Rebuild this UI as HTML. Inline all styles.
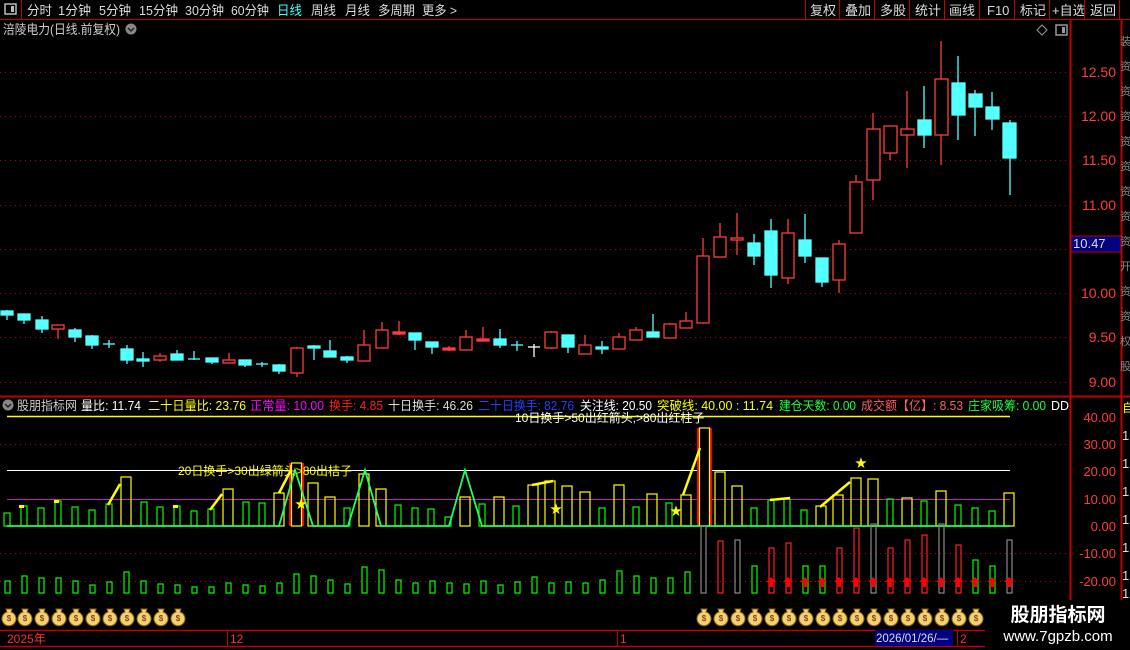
<!DOCTYPE html>
<html><head><meta charset="utf-8"><style>
html,body{margin:0;padding:0;background:#000;width:1130px;height:650px;overflow:hidden}
svg{display:block;font-family:"Liberation Sans","Noto Sans CJK SC",sans-serif}
</style></head><body>
<svg width="1130" height="650" viewBox="0 0 1130 650" xmlns="http://www.w3.org/2000/svg">
<rect width="1130" height="650" fill="#000"/>
<!-- toolbar -->
<line x1="0" y1="19.5" x2="1130" y2="19.5" stroke="#c00000"/>
<line x1="21.5" y1="0" x2="21.5" y2="19" stroke="#c00000"/>
<rect x="5" y="4" width="11" height="10" fill="none" stroke="#bbb" stroke-width="1.5"/><rect x="11" y="6" width="3" height="6" fill="#bbb"/>
<g font-size="13" fill="#ddd" lengthAdjust="spacingAndGlyphs">
<text x="27" y="15" textLength="25" lengthAdjust="spacingAndGlyphs">分时</text>
<text x="58" y="15" textLength="33" lengthAdjust="spacingAndGlyphs">1分钟</text>
<text x="99" y="15" textLength="32" lengthAdjust="spacingAndGlyphs">5分钟</text>
<text x="139" y="15" textLength="39" lengthAdjust="spacingAndGlyphs">15分钟</text>
<text x="185" y="15" textLength="39" lengthAdjust="spacingAndGlyphs">30分钟</text>
<text x="231" y="15" textLength="38" lengthAdjust="spacingAndGlyphs">60分钟</text>
<text x="277" y="15" fill="#40ffff" textLength="25" lengthAdjust="spacingAndGlyphs">日线</text>
<text x="311" y="15" textLength="25" lengthAdjust="spacingAndGlyphs">周线</text>
<text x="345" y="15" textLength="25" lengthAdjust="spacingAndGlyphs">月线</text>
<text x="378" y="15" textLength="37" lengthAdjust="spacingAndGlyphs">多周期</text>
<text x="422" y="15" textLength="35" lengthAdjust="spacingAndGlyphs">更多 &gt;</text>
<text x="810" y="15">复权</text><text x="845" y="15">叠加</text><text x="880" y="15">多股</text><text x="915" y="15">统计</text><text x="949" y="15">画线</text><text x="987" y="15">F10</text><text x="1020" y="15">标记</text><text x="1052" y="15">+自选</text><text x="1090" y="15">返回</text>
</g>
<g stroke="#c00000"><line x1="805.5" y1="0" x2="805.5" y2="19"/><line x1="839.5" y1="0" x2="839.5" y2="19"/><line x1="874.5" y1="0" x2="874.5" y2="19"/><line x1="909.5" y1="0" x2="909.5" y2="19"/><line x1="944.5" y1="0" x2="944.5" y2="19"/><line x1="979.5" y1="0" x2="979.5" y2="19"/><line x1="1014.5" y1="0" x2="1014.5" y2="19"/><line x1="1049.5" y1="0" x2="1049.5" y2="19"/><line x1="1084.5" y1="0" x2="1084.5" y2="19"/><line x1="1119.5" y1="0" x2="1119.5" y2="19"/></g>
<text x="3" y="34" font-size="13" fill="#ccc" textLength="117" lengthAdjust="spacingAndGlyphs">涪陵电力(日线.前复权)</text>
<circle cx="131" cy="29" r="5.5" fill="#888"/><path d="M128 28 l3 3 l3 -3" stroke="#222" stroke-width="1.5" fill="none"/>
<path d="M1042 25 l5 5 l-5 5 l-5 -5z" fill="none" stroke="#999"/>
<rect x="1056" y="25" width="11" height="10" fill="none" stroke="#999" stroke-width="1.5"/><rect x="1062" y="27" width="3" height="6" fill="#999"/>
<!-- axes -->
<line x1="1070.5" y1="20" x2="1070.5" y2="628" stroke="#c00000" stroke-width="2"/>
<line x1="1121.5" y1="20" x2="1121.5" y2="628" stroke="#c00000" stroke-width="2"/>
<line x1="0" y1="396.5" x2="1130" y2="396.5" stroke="#c00000" stroke-width="2"/>
<g stroke="#c00000" stroke-dasharray="1,4">
<line x1="0" y1="72.5" x2="1066" y2="72.5"/><line x1="0" y1="116.5" x2="1066" y2="116.5"/><line x1="0" y1="160.5" x2="1066" y2="160.5"/><line x1="0" y1="205.5" x2="1066" y2="205.5"/><line x1="0" y1="249.5" x2="1066" y2="249.5"/><line x1="0" y1="293.5" x2="1066" y2="293.5"/><line x1="0" y1="337.5" x2="1066" y2="337.5"/><line x1="0" y1="382.5" x2="1066" y2="382.5"/>
<line x1="0" y1="444.5" x2="1066" y2="444.5"/><line x1="0" y1="553.5" x2="1066" y2="553.5"/><line x1="0" y1="581.5" x2="1066" y2="581.5"/>
</g>
<g font-size="14" fill="#ff3c3c" text-anchor="end">
<text x="1116" y="77">12.50</text><text x="1116" y="121">12.00</text><text x="1116" y="165">11.50</text><text x="1116" y="210">11.00</text><text x="1116" y="298">10.00</text><text x="1116" y="342">9.50</text><text x="1116" y="387">9.00</text>
</g>
<g font-size="13" fill="#ff3c3c" text-anchor="end">
<text x="1116" y="422">40.00</text><text x="1116" y="449">30.00</text><text x="1116" y="476">20.00</text><text x="1116" y="504">10.00</text><text x="1116" y="531">0.00</text><text x="1116" y="558">-10.00</text><text x="1116" y="586">-20.00</text>
</g>
<rect x="1071" y="236" width="50" height="16" fill="#000080" stroke="#c00000"/>
<text x="1073" y="248" font-size="13" fill="#ddd">10.47</text>
<g fill="#888" font-size="11"><text x="1120" y="45">装</text><text x="1120" y="70">资</text><text x="1120" y="95">资</text><text x="1120" y="120">资</text><text x="1120" y="145">资</text><text x="1120" y="170">资</text><text x="1120" y="195">资</text><text x="1120" y="220">资</text><text x="1120" y="245">资</text><text x="1120" y="270">开</text><text x="1120" y="295">资</text><text x="1120" y="320">资</text><text x="1120" y="345">权</text><text x="1120" y="370">股</text></g>
<g fill="#ddd" font-size="13"><text x="1122" y="440">1</text><text x="1122" y="468">1</text><text x="1122" y="496">1</text><text x="1122" y="524">1</text><text x="1122" y="552">1</text><text x="1122" y="580">1</text><text x="1122" y="598">1</text></g>
<text x="1122" y="412" font-size="12" fill="#ff0">自</text>

<!-- candles -->
<g stroke-width="1.3">
<g stroke="#54ffff" fill="#54ffff">
<line x1="7" y1="310" x2="7" y2="320"/><rect x="1" y="311" width="12" height="4"/>
<line x1="24" y1="314" x2="24" y2="324"/><rect x="18" y="314" width="12" height="6"/>
<line x1="42" y1="316" x2="42" y2="333"/><rect x="36" y="320" width="12" height="9"/>
<line x1="75" y1="328" x2="75" y2="342"/><rect x="69" y="330" width="12" height="7"/>
<line x1="92" y1="335" x2="92" y2="349"/><rect x="86" y="336" width="12" height="9"/>
<line x1="109" y1="340" x2="109" y2="348"/><line x1="103" y1="344" x2="115" y2="344"/>
<line x1="127" y1="345" x2="127" y2="364"/><rect x="121" y="349" width="12" height="11"/>
<line x1="143" y1="352" x2="143" y2="367"/><rect x="137" y="359" width="12" height="2"/>
<line x1="177" y1="350" x2="177" y2="360"/><rect x="171" y="354" width="12" height="6"/>
<line x1="194" y1="351" x2="194" y2="360"/><line x1="188" y1="359" x2="200" y2="359"/>
<line x1="212" y1="358" x2="212" y2="364"/><rect x="206" y="358" width="12" height="4"/>
<line x1="245" y1="360" x2="245" y2="367"/><rect x="239" y="360" width="12" height="5"/>
<line x1="262" y1="362" x2="262" y2="367"/><line x1="256" y1="364" x2="268" y2="364"/>
<line x1="279" y1="364" x2="279" y2="374"/><rect x="273" y="365" width="12" height="6"/>
<line x1="314" y1="345" x2="314" y2="360"/><rect x="308" y="346" width="12" height="2"/>
<line x1="330" y1="340" x2="330" y2="357"/><rect x="324" y="351" width="12" height="6"/>
<line x1="347" y1="356" x2="347" y2="363"/><rect x="341" y="357" width="12" height="3"/>
<line x1="415" y1="333" x2="415" y2="350"/><rect x="409" y="333" width="12" height="7"/>
<line x1="432" y1="342" x2="432" y2="354"/><rect x="426" y="342" width="12" height="5"/>
<line x1="500" y1="329" x2="500" y2="348"/><rect x="494" y="339" width="12" height="6"/>
<line x1="517" y1="341" x2="517" y2="351"/><line x1="511" y1="345" x2="523" y2="345"/>
<line x1="568" y1="335" x2="568" y2="353"/><rect x="562" y="335" width="12" height="12"/>
<line x1="602" y1="341" x2="602" y2="354"/><rect x="596" y="347" width="12" height="2"/>
<line x1="653" y1="314" x2="653" y2="337"/><rect x="647" y="332" width="12" height="5"/>
<line x1="754" y1="234" x2="754" y2="265"/><rect x="748" y="243" width="12" height="13"/>
<line x1="771" y1="219" x2="771" y2="288"/><rect x="765" y="231" width="12" height="44"/>
<line x1="805" y1="214" x2="805" y2="263"/><rect x="799" y="240" width="12" height="16"/>
<line x1="822" y1="258" x2="822" y2="287"/><rect x="816" y="258" width="12" height="24"/>
<line x1="924" y1="86" x2="924" y2="148"/><rect x="918" y="120" width="13" height="15"/>
<line x1="958" y1="56" x2="958" y2="140"/><rect x="952" y="83" width="13" height="32"/>
<line x1="975" y1="90" x2="975" y2="136"/><rect x="969" y="94" width="13" height="13"/>
<line x1="992" y1="92" x2="992" y2="130"/><rect x="986" y="107" width="13" height="12"/>
<line x1="1010" y1="120" x2="1010" y2="195"/><rect x="1003" y="123" width="13" height="35"/>
</g>
<line x1="534" y1="344" x2="534" y2="357" stroke="#fff"/><line x1="528" y1="347" x2="540" y2="347" stroke="#fff"/>
<g stroke="#ff3c3c" fill="#000">
<line x1="58" y1="325" x2="58" y2="339"/><rect x="52" y="325" width="12" height="4"/>
<line x1="160" y1="353" x2="160" y2="362"/><rect x="154" y="356" width="12" height="4"/>
<line x1="229" y1="353" x2="229" y2="363"/><rect x="223" y="360" width="12" height="3"/>
<line x1="297" y1="347" x2="297" y2="377"/><rect x="291" y="348" width="12" height="25"/>
<line x1="364" y1="330" x2="364" y2="361"/><rect x="358" y="345" width="12" height="16"/>
<line x1="382" y1="322" x2="382" y2="348"/><rect x="376" y="330" width="12" height="18"/>
<line x1="399" y1="321" x2="399" y2="335"/><rect x="393" y="332" width="12" height="2" fill="#ff3c3c"/>
<line x1="449" y1="346" x2="449" y2="351"/><rect x="443" y="348" width="12" height="2" fill="#ff3c3c"/>
<line x1="466" y1="330" x2="466" y2="350"/><rect x="460" y="337" width="12" height="13"/>
<line x1="483" y1="327" x2="483" y2="341"/><rect x="477" y="339" width="12" height="2" fill="#ff3c3c"/>
<line x1="551" y1="331" x2="551" y2="349"/><rect x="545" y="332" width="12" height="16"/>
<line x1="585" y1="335" x2="585" y2="354"/><rect x="579" y="345" width="12" height="9"/>
<line x1="619" y1="333" x2="619" y2="349"/><rect x="613" y="337" width="12" height="12"/>
<line x1="636" y1="327" x2="636" y2="340"/><rect x="630" y="330" width="12" height="10"/>
<line x1="670" y1="323" x2="670" y2="338"/><rect x="664" y="324" width="12" height="14"/>
<line x1="686" y1="312" x2="686" y2="328"/><rect x="680" y="321" width="12" height="7"/>
<line x1="703" y1="238" x2="703" y2="323"/><rect x="697" y="256" width="12" height="67"/>
<line x1="720" y1="223" x2="720" y2="257"/><rect x="714" y="237" width="12" height="20"/>
<line x1="737" y1="213" x2="737" y2="255"/><rect x="731" y="238" width="12" height="2"/>
<line x1="788" y1="219" x2="788" y2="284"/><rect x="782" y="233" width="12" height="45"/>
<line x1="839" y1="240" x2="839" y2="293"/><rect x="833" y="244" width="12" height="36"/>
<line x1="856" y1="175" x2="856" y2="233"/><rect x="850" y="182" width="12" height="51"/>
<line x1="873" y1="113" x2="873" y2="200"/><rect x="867" y="129" width="13" height="51"/>
<line x1="890" y1="126" x2="890" y2="160"/><rect x="884" y="126" width="13" height="27"/>
<line x1="907" y1="91" x2="907" y2="168"/><rect x="901" y="129" width="13" height="6"/>
<line x1="941" y1="41" x2="941" y2="165"/><rect x="935" y="79" width="13" height="56"/>
</g>
</g>

<!-- indicator header -->
<circle cx="8" cy="405" r="5.5" fill="#888"/><path d="M5 404 l3 3 l3 -3" stroke="#222" stroke-width="1.5" fill="none"/>
<g font-size="12.5">
<text x="17" y="410" fill="#ccc" textLength="60" lengthAdjust="spacingAndGlyphs">股朋指标网</text>
<text x="81" y="410" fill="#fff" textLength="60" lengthAdjust="spacingAndGlyphs">量比: 11.74</text>
<text x="148" y="410" fill="#ff0" textLength="98" lengthAdjust="spacingAndGlyphs">二十日量比: 23.76</text>
<text x="250" y="410" fill="#ff00ff" textLength="74" lengthAdjust="spacingAndGlyphs">正常量: 10.00</text>
<text x="329" y="410" fill="#ff2020" textLength="54" lengthAdjust="spacingAndGlyphs">换手: 4.85</text>
<text x="388" y="410" fill="#ddd" textLength="85" lengthAdjust="spacingAndGlyphs">十日换手: 46.26</text>
<text x="478" y="410" fill="#2040ff" textLength="96" lengthAdjust="spacingAndGlyphs">二十日换手: 82.76</text>
<text x="580" y="410" fill="#fff" textLength="72" lengthAdjust="spacingAndGlyphs">关注线: 20.50</text>
<text x="657" y="410" fill="#ff0" textLength="116" lengthAdjust="spacingAndGlyphs">突破线: 40.00 : 11.74</text>
<text x="779" y="410" fill="#20ff40" textLength="77" lengthAdjust="spacingAndGlyphs">建仓天数: 0.00</text>
<text x="861" y="410" fill="#ff6060" textLength="102" lengthAdjust="spacingAndGlyphs">成交额【亿】: 8.53</text>
<text x="968" y="410" fill="#20ff40" textLength="78" lengthAdjust="spacingAndGlyphs">庄家吸筹: 0.00</text>
<text x="1051" y="410" fill="#fff">DD</text>
</g>
<!-- indicator lines -->
<line x1="7" y1="416.5" x2="1010" y2="416.5" stroke="#ff0" stroke-width="1.5"/>
<line x1="7" y1="470.5" x2="1010" y2="470.5" stroke="#fff"/>
<line x1="7" y1="499.5" x2="1010" y2="499.5" stroke="#c020c0"/>
<text x="515" y="422" font-size="12" fill="#fff">10日换手&gt;50出红箭头,&gt;80出红柱子</text>
<!-- bars positive -->
<g fill="none" stroke-width="1.2">
<g stroke="#00ff00">
<rect x="4" y="513" width="6" height="13"/><rect x="21" y="506" width="6" height="20"/><rect x="38" y="508" width="6" height="18"/><rect x="55" y="501" width="6" height="25"/><rect x="72" y="507" width="6" height="19"/><rect x="89" y="510" width="6" height="16"/><rect x="106" y="504" width="6" height="22"/><rect x="141" y="502" width="6" height="24"/><rect x="157" y="507" width="6" height="19"/><rect x="174" y="506" width="6" height="20"/><rect x="191" y="511" width="6" height="15"/><rect x="208" y="509" width="6" height="17"/><rect x="243" y="502" width="6" height="24"/><rect x="259" y="503" width="6" height="23"/><rect x="344" y="508" width="6" height="18"/><rect x="395" y="505" width="6" height="21"/><rect x="412" y="508" width="6" height="18"/><rect x="428" y="509" width="6" height="17"/><rect x="445" y="517" width="6" height="9"/><rect x="479" y="504" width="6" height="22"/><rect x="513" y="506" width="6" height="20"/><rect x="599" y="508" width="6" height="18"/><rect x="633" y="507" width="6" height="19"/><rect x="666" y="503" width="6" height="23"/><rect x="751" y="508" width="6" height="18"/><rect x="768" y="500" width="6" height="26"/><rect x="784" y="499" width="6" height="27"/><rect x="801" y="510" width="6" height="16"/><rect x="887" y="499" width="6" height="27"/><rect x="921" y="501" width="6" height="25"/><rect x="955" y="505" width="6" height="21"/><rect x="972" y="508" width="6" height="18"/><rect x="989" y="511" width="6" height="15"/>
</g>
<g stroke="#ff0">
<rect x="121" y="477" width="10" height="49"/><rect x="223" y="489" width="10" height="37"/><rect x="274" y="493" width="10" height="33"/><rect x="308" y="483" width="10" height="43"/><rect x="325" y="497" width="10" height="29"/><rect x="359" y="474" width="10" height="52"/><rect x="376" y="489" width="10" height="37"/><rect x="460" y="497" width="10" height="29"/><rect x="494" y="497" width="10" height="29"/><rect x="528" y="485" width="10" height="41"/><rect x="545" y="481" width="10" height="45"/><rect x="562" y="486" width="10" height="40"/><rect x="580" y="492" width="10" height="34"/><rect x="614" y="485" width="10" height="41"/><rect x="647" y="494" width="10" height="32"/><rect x="681" y="495" width="10" height="31"/><rect x="715" y="472" width="10" height="54"/><rect x="732" y="486" width="10" height="40"/><rect x="816" y="506" width="10" height="20"/><rect x="833" y="495" width="10" height="31"/><rect x="851" y="478" width="10" height="48"/><rect x="868" y="479" width="10" height="47"/><rect x="902" y="498" width="10" height="28"/><rect x="936" y="491" width="10" height="35"/><rect x="1004" y="493" width="10" height="33"/>
</g>
</g>
<rect x="289" y="463" width="15" height="63" fill="#ff0000"/><rect x="291.5" y="463" width="10" height="63" fill="#000" stroke="#ff0" stroke-width="1.2"/>
<rect x="697" y="428" width="15" height="98" fill="#ff0000"/><rect x="699.5" y="428" width="10" height="98" fill="#000" stroke="#ff0" stroke-width="1.2"/>
<polyline points="7,526 279,526 295,470 313,526 348,526 365,470 381,526 449,526 465,470 482,526 1010,526" fill="none" stroke="#20ff60" stroke-width="1.8"/>
<g stroke="#ff0" stroke-width="2.5">
<line x1="108" y1="505" x2="120" y2="484"/><line x1="210" y1="510" x2="222" y2="494"/><line x1="279" y1="493" x2="291" y2="470"/>
<line x1="532" y1="485" x2="553" y2="481"/><line x1="683" y1="495" x2="700" y2="448"/><line x1="820" y1="507" x2="850" y2="482"/><line x1="770" y1="500" x2="790" y2="498"/>
</g>
<g fill="#ff0"><rect x="19" y="505" width="5" height="3"/><rect x="54" y="500" width="5" height="3"/><rect x="173" y="505" width="5" height="3"/></g>
<text x="178" y="475" font-size="12" fill="#ff0">20日换手&gt;30出绿箭头&gt;80出桔子</text>
<g fill="#ff0" font-size="12"><text x="295" y="508">★</text><text x="550" y="513">★</text><text x="670" y="515">★</text><text x="855" y="467">★</text></g>
<!-- negative bars -->
<g fill="none" stroke-width="1.2">
<g stroke="#00ff00">
<rect x="5" y="581" width="5" height="12"/><rect x="22" y="576" width="5" height="17"/><rect x="39" y="578" width="5" height="15"/><rect x="56" y="578" width="5" height="15"/><rect x="73" y="581" width="5" height="12"/><rect x="90" y="585" width="5" height="8"/><rect x="107" y="582" width="5" height="11"/><rect x="124" y="572" width="5" height="21"/><rect x="141" y="581" width="5" height="12"/><rect x="158" y="584" width="5" height="9"/><rect x="175" y="585" width="5" height="8"/><rect x="192" y="587" width="5" height="6"/><rect x="209" y="587" width="5" height="6"/><rect x="226" y="583" width="5" height="10"/><rect x="243" y="585" width="5" height="8"/><rect x="260" y="586" width="5" height="7"/><rect x="277" y="583" width="5" height="10"/><rect x="294" y="574" width="5" height="19"/><rect x="311" y="576" width="5" height="17"/><rect x="328" y="580" width="5" height="13"/><rect x="345" y="584" width="5" height="9"/><rect x="362" y="567" width="5" height="26"/><rect x="379" y="570" width="5" height="23"/><rect x="396" y="580" width="5" height="13"/><rect x="413" y="583" width="5" height="10"/><rect x="430" y="581" width="5" height="12"/><rect x="447" y="583" width="5" height="10"/><rect x="464" y="584" width="5" height="9"/><rect x="481" y="581" width="5" height="12"/><rect x="498" y="585" width="5" height="8"/><rect x="515" y="582" width="5" height="11"/><rect x="532" y="577" width="5" height="16"/><rect x="549" y="583" width="5" height="10"/><rect x="566" y="582" width="5" height="11"/><rect x="583" y="583" width="5" height="10"/><rect x="600" y="580" width="5" height="13"/><rect x="617" y="571" width="5" height="22"/><rect x="634" y="576" width="5" height="17"/><rect x="651" y="578" width="5" height="15"/><rect x="668" y="578" width="5" height="15"/><rect x="685" y="572" width="5" height="21"/>
<rect x="752" y="566" width="5" height="27"/><rect x="803" y="566" width="5" height="27"/><rect x="820" y="566" width="5" height="27"/><rect x="973" y="560" width="5" height="33"/><rect x="990" y="566" width="5" height="27"/>
</g>
<g stroke="#ff2020">
<rect x="718" y="541" width="5" height="52"/><rect x="769" y="548" width="5" height="45"/><rect x="786" y="543" width="5" height="50"/><rect x="837" y="548" width="5" height="45"/><rect x="854" y="528" width="5" height="65"/><rect x="888" y="548" width="5" height="45"/><rect x="905" y="540" width="5" height="53"/><rect x="922" y="535" width="5" height="58"/><rect x="956" y="545" width="5" height="48"/>
</g>
<g stroke="#888"><rect x="701" y="526" width="5" height="67"/><rect x="735" y="540" width="5" height="53"/><rect x="871" y="524" width="5" height="69"/><rect x="939" y="524" width="5" height="69"/><rect x="1007" y="540" width="5" height="53"/></g>
</g>
<g fill="#ff0000">
<path d="M771 577 l5 5 h-3 v5 h-4 v-5 h-3z"/><path d="M788 577 l5 5 h-3 v5 h-4 v-5 h-3z"/><path d="M805 577 l5 5 h-3 v5 h-4 v-5 h-3z"/><path d="M822 577 l5 5 h-3 v5 h-4 v-5 h-3z"/><path d="M839 577 l5 5 h-3 v5 h-4 v-5 h-3z"/><path d="M856 577 l5 5 h-3 v5 h-4 v-5 h-3z"/><path d="M873 577 l5 5 h-3 v5 h-4 v-5 h-3z"/><path d="M890 577 l5 5 h-3 v5 h-4 v-5 h-3z"/><path d="M907 577 l5 5 h-3 v5 h-4 v-5 h-3z"/><path d="M924 577 l5 5 h-3 v5 h-4 v-5 h-3z"/><path d="M941 577 l5 5 h-3 v5 h-4 v-5 h-3z"/><path d="M958 577 l5 5 h-3 v5 h-4 v-5 h-3z"/><path d="M975 577 l5 5 h-3 v5 h-4 v-5 h-3z"/><path d="M992 577 l5 5 h-3 v5 h-4 v-5 h-3z"/><path d="M1009 577 l5 5 h-3 v5 h-4 v-5 h-3z"/>
</g>
<!-- money bags -->
<defs><g id="bag"><path d="M-3 -8 h6 l-1 3 a7 7 0 1 1 -4 0z" fill="#f5d070" stroke="#8a6a10"/><text x="0" y="4" font-size="8" text-anchor="middle" fill="#8a4020" font-weight="bold">$</text></g></defs>
<g>
<use href="#bag" x="9" y="617"/><use href="#bag" x="25" y="617"/><use href="#bag" x="42" y="617"/><use href="#bag" x="59" y="617"/><use href="#bag" x="76" y="617"/><use href="#bag" x="93" y="617"/><use href="#bag" x="110" y="617"/><use href="#bag" x="127" y="617"/><use href="#bag" x="144" y="617"/><use href="#bag" x="161" y="617"/><use href="#bag" x="178" y="617"/>
<use href="#bag" x="704" y="617"/><use href="#bag" x="721" y="617"/><use href="#bag" x="738" y="617"/><use href="#bag" x="755" y="617"/><use href="#bag" x="772" y="617"/><use href="#bag" x="789" y="617"/><use href="#bag" x="806" y="617"/><use href="#bag" x="823" y="617"/><use href="#bag" x="840" y="617"/><use href="#bag" x="857" y="617"/><use href="#bag" x="874" y="617"/><use href="#bag" x="891" y="617"/><use href="#bag" x="908" y="617"/><use href="#bag" x="925" y="617"/><use href="#bag" x="942" y="617"/><use href="#bag" x="959" y="617"/><use href="#bag" x="976" y="617"/>
</g>
<!-- timeline -->
<line x1="0" y1="630.5" x2="1130" y2="630.5" stroke="#c00000" stroke-width="1.5"/>
<line x1="0" y1="646.5" x2="1130" y2="646.5" stroke="#c00000" stroke-width="1.5"/>
<line x1="227.5" y1="630" x2="227.5" y2="646" stroke="#c00000"/>
<line x1="617.5" y1="630" x2="617.5" y2="646" stroke="#c00000"/>
<line x1="957.5" y1="630" x2="957.5" y2="646" stroke="#c00000"/>
<g font-size="12" fill="#ff3030"><text x="7" y="643">2025年</text><text x="230" y="643">12</text><text x="620" y="643">1</text><text x="960" y="643">2</text></g>
<rect x="875" y="630" width="78" height="16" fill="#000080"/>
<text x="876" y="642" font-size="11.5" fill="#ddd">2026/01/26/—</text>
<!-- watermark -->
<rect x="985" y="600" width="145" height="50" fill="#000"/>
<text x="1058" y="621" font-size="19" font-weight="bold" fill="#fff" text-anchor="middle">股朋指标网</text>
<text x="1058" y="641" font-size="15" fill="#fff" text-anchor="middle">www.7gpzb.com</text>
</svg>
</body></html>
